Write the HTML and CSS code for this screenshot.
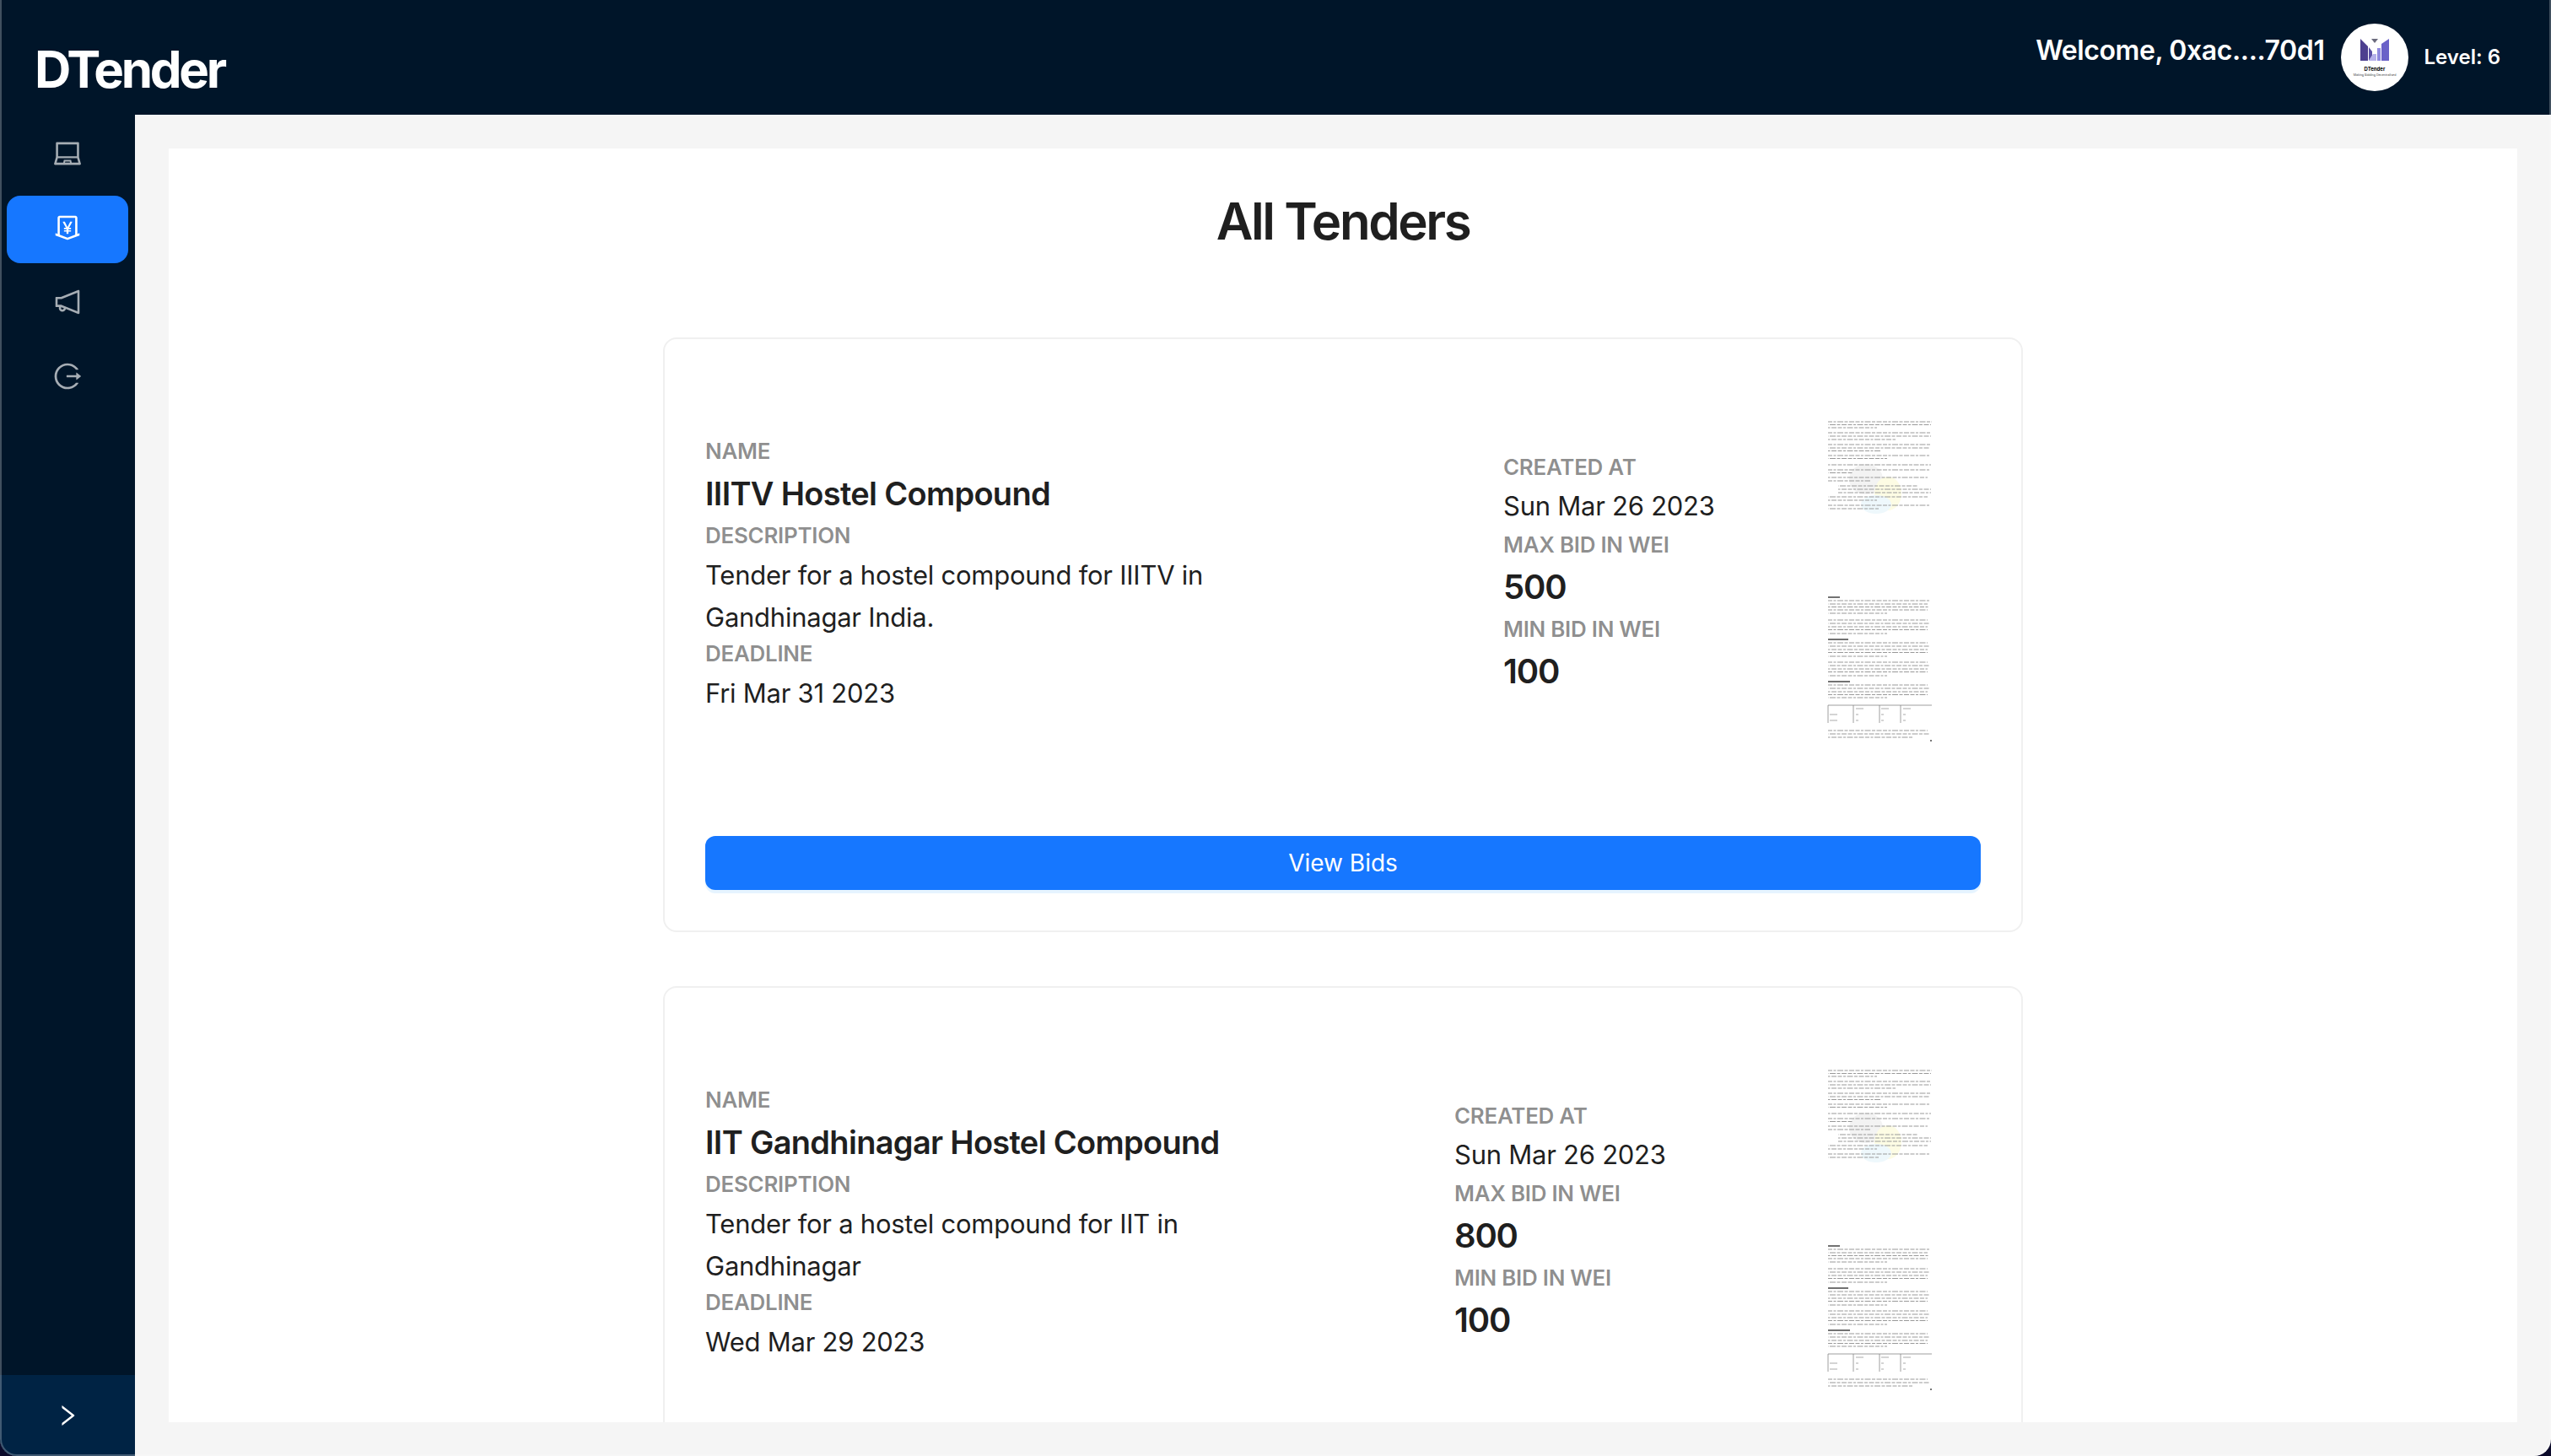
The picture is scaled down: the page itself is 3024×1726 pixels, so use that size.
FILE: index.html
```html
<!DOCTYPE html>
<html>

<head>
	<title>DTender</title>
	<meta charset="UTF-8">
	<meta name="viewport" content="width=device-width, initial-scale=1.0">
	<link rel="stylesheet" href="styles.css">
</head>

<body>
	<svg class="defs" width="0" height="0">
		<symbol id="doc-pages" viewBox="0 0 140 456">
			<ellipse cx="52" cy="118" rx="20" ry="18" fill="#f3f3f3"></ellipse>
			<ellipse cx="78" cy="135" rx="16" ry="20" fill="#fdfce4"></ellipse>
			<ellipse cx="64" cy="148" rx="18" ry="11" fill="#eef8fc"></ellipse>
			<!-- first page -->
			<path class="doc-lines" d="M7 50h123M7 63h122M7 77h122M7 90h120M7 107h120M7 120h50M19 134h110M7 149h120"></path>
			<path class="doc-lines doc-lines-b" d="M7 53.500h122M7 67h122M7 81h120M7 93.500h70M7 110.500h30M19 126h95M7 139h118M7 153h60"></path>
			<path class="doc-lines doc-lines-c" d="M7 57h58M7 71h80M7 84.500h62M7 101h122M7 116h118M19 130h110M7 143h58"></path>
			<!-- second page -->
			<path class="doc-lines" d="M7 262h120M7 273h118M7 285h118M7 296.500h118M7 312h118M7 323.500h118M7 335h118M7 346.500h118M7 362h118M7 373.500h118M7 416h118"></path>
			<path class="doc-lines doc-lines-b" d="M7 266h118M7 277h70M7 289h120M7 301h70M7 316h120M7 328h70M7 339h120M7 351h70M7 366h120M7 377h70M7 420h120"></path>
			<path class="doc-lines doc-lines-c" d="M7 269.500h120M7 293h118M7 320h118M7 343h118M7 370h118M7 424h100"></path>
			<path class="doc-heads" d="M7 258h14M7 308h24M7 358h26"></path>
			<path class="doc-table" d="M7 386h123M7 386v21M37 386v21M68 386v21M93 386v21"></path>
			<path class="doc-cells" d="M40 390h9M70 390h9M96 390h9M9 397h9M40 397h3M70 397h3M96 397h3M9 404h9M40 404h3M70 404h3M96 404h3"></path>
			<rect x="128" y="427" width="2" height="2" fill="#777"></rect>
		</symbol>
	</svg>

	<div class="app">
		<header class="topbar">
			<div class="brand">DTender</div>
			<div class="account">
				<span class="welcome">Welcome, 0xac....70d1</span>
				<div class="avatar">
					<svg width="80" height="80" viewBox="0 0 80 80">
						<path d="M23 18l9 9v17h-9z" fill="#4d3f8f"></path>
						<path d="M33 28l4 5v5l-4 6z" fill="#5a4fa6"></path>
						<path d="M38 36h4v8h-9z" fill="#b5b0ea"></path>
						<path d="M43 29h4v15h-4z" fill="#908adf"></path>
						<path d="M48 24l9-6v26h-9z" fill="#6a62c8"></path>
						<path d="M36 18h8l-4 5z" fill="#6b6b7d"></path>
						<text class="avatar-name" x="40" y="55.500">DTender</text>
						<text class="avatar-tag" x="40" y="61.500">Making Bidding Decentralised</text>
					</svg>
				</div>
				<span class="level">Level: 6</span>
			</div>
		</header>

		<div class="layout">
			<aside class="sider">
				<nav class="nav">
					<a class="nav-item">
						<svg class="icon" viewBox="64 64 896 896"><path d="M956.9 845.1L896.4 632V168c0-17.7-14.3-32-32-32h-704c-17.7 0-32 14.3-32 32v464L67.9 845.1C60.4 866 75.8 888 98 888h828.8c22.2 0 37.6-22 30.1-42.9zM200.4 208h624v395h-624V208zm228.3 608l8.1-37h150.3l8.1 37H428.7zm224 0l-19.1-86.7c-.8-3.7-4.1-6.3-7.8-6.3H398.2c-3.8 0-7 2.6-7.8 6.3L371.3 816H151l42.3-149h638.2l42.3 149H652.7z"></path></svg>
					</a>
					<a class="nav-item active">
						<svg class="icon" viewBox="64 64 896 896"><path d="M911.5 700.7a8 8 0 00-10.3-4.8L840 718.2V180c0-37.6-30.4-68-68-68H252c-37.6 0-68 30.4-68 68v538.2l-61.3-22.3c-.9-.3-1.8-.5-2.7-.5-4.4 0-8 3.6-8 8V763c0 3.3 2.1 6.3 5.3 7.5L501 910.1c7.1 2.6 14.8 2.6 21.9 0l383.8-139.5c3.2-1.2 5.3-4.2 5.3-7.5v-59.6c0-1-.2-1.9-.5-2.8zM512 837.5l-256-93.1V184h512v560.4l-256 93.1zM660.6 312h-54.5c-3 0-5.8 1.7-7.1 4.4l-84.7 168.8H511l-84.7-168.8a8 8 0 00-7.1-4.4h-55.7c-1.3 0-2.6.3-3.8 1-3.9 2.1-5.3 7-3.2 10.8l103.9 191.6h-57c-4.4 0-8 3.6-8 8v27.1c0 4.4 3.6 8 8 8h76v39h-76c-4.4 0-8 3.6-8 8v27.1c0 4.4 3.6 8 8 8h76V704c0 4.4 3.6 8 8 8h49.9c4.4 0 8-3.6 8-8v-63.5h76.3c4.4 0 8-3.6 8-8v-27.1c0-4.4-3.6-8-8-8h-76.3v-39h76.3c4.4 0 8-3.6 8-8v-27.1c0-4.4-3.6-8-8-8H564l103.7-191.6c.6-1.2 1-2.5 1-3.8-.1-4.3-3.7-7.9-8.1-7.9z"></path></svg>
					</a>
					<a class="nav-item">
						<svg class="icon" viewBox="64 64 896 896"><path d="M880 112c-3.8 0-7.7.7-11.6 2.3L292 345.9H128c-8.8 0-16 7.4-16 16.6v299c0 9.2 7.2 16.6 16 16.6h101.7c-3.7 11.6-5.7 23.9-5.7 36.4 0 65.9 53.8 119.5 120 119.5 55.4 0 102.1-37.6 115.9-88.4l408.6 164.2c3.9 1.5 7.8 2.3 11.6 2.3 16.9 0 32-14.2 32-33.2V145.2C912 126.2 897 112 880 112zM344 762.3c-26.5 0-48-21.4-48-47.8 0-11.2 3.9-21.9 11-30.4l84.9 34.1c-2 24.6-22.7 44.1-47.9 44.1zm496 58.4L318.8 611.3l-14.3-5.7H184V417.4h120.5l14.3-5.7L840 203.3v617.4z"></path></svg>
					</a>
					<a class="nav-item">
						<svg class="icon" viewBox="64 64 896 896"><path d="M868 732h-70.3c-4.8 0-9.3 2.1-12.3 5.8-7 8.5-14.5 16.7-22.4 24.5a353.84 353.84 0 01-112.7 75.9A352.8 352.8 0 01512.4 866c-47.9 0-94.3-9.4-137.9-27.8a353.84 353.84 0 01-112.7-75.9 353.28 353.28 0 01-76-112.5C167.3 606.2 158 559.9 158 512s9.4-94.2 27.8-137.8c17.8-42.1 43.4-80 76-112.5s70.5-58.1 112.7-75.9c43.6-18.4 90-27.8 137.9-27.8 47.9 0 94.3 9.3 137.9 27.8 42.2 17.8 80.1 43.4 112.7 75.9 7.9 7.9 15.3 16.1 22.4 24.5 3 3.7 7.6 5.8 12.3 5.8H868c6.3 0 10.2-7 6.7-12.3C798 160.5 663.8 81.6 511.3 82 271.7 82.6 79.6 277.1 82 516.4 84.4 751.9 276.2 942 512.4 942c152.1 0 285.7-78.8 362.3-197.7 3.4-5.3-.4-12.3-6.7-12.3zm88.9-226.3L815 393.7c-5.3-4.2-13-.4-13 6.3v76H488c-4.4 0-8 3.6-8 8v56c0 4.4 3.6 8 8 8h314v76c0 6.7 7.8 10.5 13 6.3l141.9-112a8 8 0 000-12.6z"></path></svg>
					</a>
				</nav>
				<div class="trigger">
					<svg class="icon trigger-icon" viewBox="64 64 896 896"><path d="M765.7 486.8L314.9 134.7A7.97 7.97 0 00302 141v77.3c0 4.9 2.3 9.6 6.1 12.6l360 281.1-360 281.1c-3.9 3-6.1 7.7-6.1 12.6V883c0 6.7 7.7 10.4 12.9 6.3l450.8-352.1a31.96 31.96 0 000-50.4z"></path></svg>
				</div>
			</aside>

			<main class="content">
				<div class="panel">
					<h1 class="page-title">All Tenders</h1>

					<section class="card">
						<div class="card-row">
							<div class="col-main">
								<div class="label">Name</div>
								<div class="title">IIITV Hostel Compound</div>
								<div class="label">Description</div>
								<div class="text desc">Tender for a hostel compound for IIITV in Gandhinagar India.</div>
								<div class="label">Deadline</div>
								<div class="text">Fri Mar 31 2023</div>
							</div>
							<div class="col-side">
								<div class="label">Created at</div>
								<div class="text side-date">Sun Mar 26 2023</div>
								<div class="label">Max bid in wei</div>
								<div class="amount">500</div>
								<div class="label">Min bid in wei</div>
								<div class="amount">100</div>
							</div>
							<svg class="docs" width="140" height="456"><use href="#doc-pages"></use></svg>
						</div>
						<button class="btn" type="button">View Bids</button>
					</section>

					<section class="card">
						<div class="card-row">
							<div class="col-main col-main-narrow">
								<div class="label">Name</div>
								<div class="title">IIT Gandhinagar Hostel Compound</div>
								<div class="label">Description</div>
								<div class="text desc">Tender for a hostel compound for IIT in Gandhinagar</div>
								<div class="label">Deadline</div>
								<div class="text">Wed Mar 29 2023</div>
							</div>
							<div class="col-side">
								<div class="label">Created at</div>
								<div class="text side-date">Sun Mar 26 2023</div>
								<div class="label">Max bid in wei</div>
								<div class="amount">800</div>
								<div class="label">Min bid in wei</div>
								<div class="amount">100</div>
							</div>
							<svg class="docs" width="140" height="456"><use href="#doc-pages"></use></svg>
						</div>
					</section>
				</div>
			</main>
		</div>
	</div>
</body>

</html>
```

FILE: styles.css
```css
* {
	box-sizing: border-box;
}

html,
body {
	height: 100%;
}

body {
	margin: 0;
	overflow: hidden;
	background-color: #0b0a2a;
	font-family: Inter, "Liberation Sans", sans-serif;
	color: #1f1f1f;
}

.defs {
	position: absolute;
}

.app {
	position: relative;
	display: flex;
	flex-direction: column;
	height: 100%;
	overflow: hidden;
	border-radius: 0 0 20px 20px;
	background-color: #f5f5f5;
}

/* thin window edge, lies over everything */
.app::after {
	content: "";
	position: absolute;
	inset: 0;
	border: solid rgba(255, 255, 255, 0.25);
	border-width: 0 2px 2px 2px;
	border-radius: 0 0 20px 20px;
	pointer-events: none;
}

/* top bar */
.topbar {
	display: flex;
	flex: 0 0 136px;
	align-items: center;
	justify-content: space-between;
	padding: 0 60px 0 41px;
	background-color: #001529;
	color: #fff;
}

.brand {
	align-self: flex-end;
	font-size: 60px;
	font-weight: 700;
	letter-spacing: -3.3px;
	line-height: 108px;
}

.account {
	display: flex;
	align-items: center;
}

.welcome {
	margin: 0 19px 18px 0;
	font-size: 32px;
	font-weight: 600;
	letter-spacing: -0.4px;
}

.avatar {
	width: 80px;
	height: 80px;
	margin-right: 19px;
	border-radius: 50%;
	background-color: #fff;
}

.avatar-name {
	font-size: 6px;
	font-weight: 700;
	text-anchor: middle;
}

.avatar-tag {
	font-size: 3.600px;
	fill: #444;
	text-anchor: middle;
}

.level {
	margin-bottom: 2px;
	font-size: 24px;
	font-weight: 600;
}

/* side menu */
.layout {
	display: flex;
	flex: 1;
	min-height: 0;
}

.sider {
	display: flex;
	flex: 0 0 160px;
	flex-direction: column;
	background-color: #001529;
}

.nav {
	display: flex;
	flex: 1;
	flex-direction: column;
	gap: 8px;
	padding: 6px 8px 0;
}

.nav-item {
	display: flex;
	align-items: center;
	justify-content: center;
	height: 80px;
	border-radius: 16px;
	color: rgba(255, 255, 255, 0.65);
}

.nav-item.active {
	margin: 2px 0 -2px;
	padding-bottom: 4px;
	background-color: #1677ff;
	color: #fff;
}

.icon {
	width: 32px;
	height: 32px;
	fill: currentColor;
}

.trigger {
	display: flex;
	flex: 0 0 96px;
	align-items: center;
	justify-content: center;
	background-color: #002344;
	color: #fff;
}

.trigger-icon {
	width: 28px;
	height: 28px;
}

/* main content */
.content {
	flex: 1;
	min-width: 0;
	padding: 40px;
}

.panel {
	height: 100%;
	overflow: hidden;
	padding-top: 46px;
	background-color: #fff;
}

.page-title {
	margin: 0 0 98px;
	font-size: 60px;
	font-weight: 600;
	letter-spacing: -2.4px;
	line-height: 80px;
	text-align: center;
}

.card {
	width: 1612px;
	margin: 0 auto 64px;
	padding: 48px;
	border: 2px solid #f0f0f0;
	border-radius: 16px;
}

.card-row {
	display: flex;
	align-items: center;
	height: 456px;
	margin-bottom: 85px;
}

.col-main {
	flex: 0 0 946px;
	padding-top: 4px;
}

.col-main-narrow {
	flex-basis: 888px;
}

.col-side {
	flex: 1;
}

.docs {
	flex: none;
	margin-right: 48px;
}

.label {
	font-size: 26px;
	font-weight: 600;
	letter-spacing: -0.3px;
	line-height: 44px;
	color: rgba(0, 0, 0, 0.45);
	text-transform: uppercase;
}

.title {
	font-size: 38px;
	font-weight: 600;
	letter-spacing: -0.7px;
	line-height: 56px;
}

.text {
	font-size: 31px;
	letter-spacing: -0.25px;
	line-height: 50px;
}

.desc {
	max-width: 640px;
	margin-bottom: -4px;
}

.side-date {
	line-height: 48px;
}

.amount {
	font-size: 40px;
	font-weight: 600;
	letter-spacing: -1.2px;
	line-height: 56px;
}

.btn {
	display: block;
	width: 100%;
	height: 64px;
	padding: 0;
	border: 0;
	border-radius: 12px;
	background-color: #1677ff;
	box-shadow: 0 4px 0 rgba(5, 145, 255, 0.1);
	color: #fff;
	font-family: inherit;
	font-size: 28px;
}

/* document thumbnails */
.doc-lines {
	fill: none;
	stroke: #999;
	stroke-width: 1.1;
	stroke-dasharray: 5 1.500 3 1.500 7 1.500 4 1.500 6 1.500;
}

.doc-lines-b {
	stroke-dashoffset: 9;
}

.doc-lines-c {
	stroke-dashoffset: 21;
}

.doc-heads {
	fill: none;
	stroke: #444;
	stroke-width: 1.4;
}

.doc-table {
	fill: none;
	stroke: #777;
	stroke-width: 0.7;
}

.doc-cells {
	fill: none;
	stroke: #aaa;
	stroke-width: 1;
}
```
